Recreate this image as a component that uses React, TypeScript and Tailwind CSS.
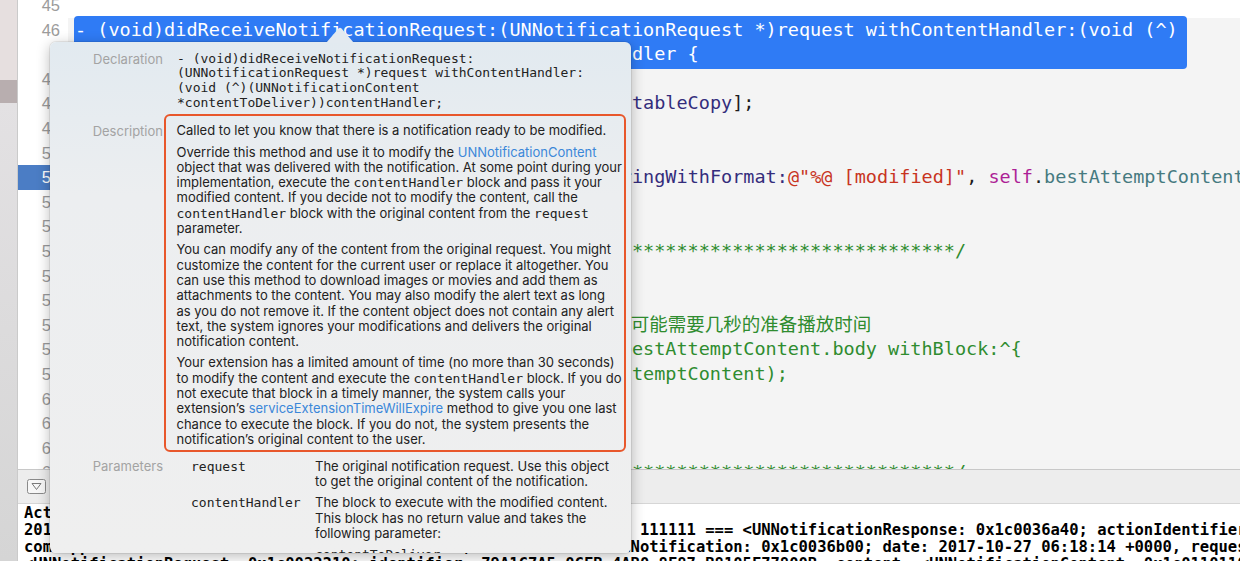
import React from "react";

type Seg = [string, string?];

const KW = "text-[#ad1f96]";
const PROP = "text-[#467a80]";
const METH = "text-[#342d7c]";
const STR = "text-[#c8341f]";
const CMT = "text-[#2f8c2f]";

const stars = "     /" + "*".repeat(73) + "/";

// editor lines 45..63 (46 is the wrapped, selected declaration)
const code: Record<number, Seg[]> = {
  45: [],
  47: [["     "], ["self", KW], [".contentHandler = contentHandler;"]],
  48: [["     "], ["self", KW], ["."], ["bestAttemptContent", PROP], [" = [request.content "], ["mutableCopy", METH], ["];"]],
  49: [],
  50: [["     // Modify the notification content here...", CMT]],
  51: [
    ["     "], ["self", KW], ["."], ["bestAttemptContent", PROP], ["."], ["title", PROP], [" = ["],
    ["NSString", METH], [" "], ["stringWithFormat:", METH], ["@\"%@ [modified]\"", STR], [", "],
    ["self", KW], ["."], ["bestAttemptContent", PROP], ["."], ["title", PROP], ["];"],
  ],
  52: [],
  53: [],
  54: [[stars, CMT]],
  55: [],
  56: [],
  57: [["     // 语音播报通知内容 (iOS 10.0+)，首次合成语音时引擎可能需要几秒的准备播放时间", CMT]],
  58: [["//     [[VoicePlayer sharedPlayer] playText:self.bestAttemptContent.body withBlock:^{", CMT]],
  59: [["//                 self.contentHandler(self.bestAttemptContent);", CMT]],
  60: [["//     }];", CMT]],
  61: [],
  62: [],
  63: [[stars, CMT]],
};

const lineNos = Array.from({ length: 19 }, (_, i) => 45 + i);

type Part = string | { c: string } | { l: string };
const desc: Part[][][] = [
  [["Called to let you know that there is a notification ready to be modified."]],
  [
    ["Override this method and use it to modify the ", { l: "UNNotificationContent" }],
    ["object that was delivered with the notification. At some point during your"],
    ["implementation, execute the ", { c: "contentHandler" }, " block and pass it your"],
    ["modified content. If you decide not to modify the content, call the"],
    [{ c: "contentHandler" }, " block with the original content from the ", { c: "request" }],
    ["parameter."],
  ],
  [
    ["You can modify any of the content from the original request. You might"],
    ["customize the content for the current user or replace it altogether. You"],
    ["can use this method to download images or movies and add them as"],
    ["attachments to the content. You may also modify the alert text as long"],
    ["as you do not remove it. If the content object does not contain any alert"],
    ["text, the system ignores your modifications and delivers the original"],
    ["notification content."],
  ],
  [
    ["Your extension has a limited amount of time (no more than 30 seconds)"],
    ["to modify the content and execute the ", { c: "contentHandler" }, " block. If you do"],
    ["not execute that block in a timely manner, the system calls your"],
    ["extension\u2019s ", { l: "serviceExtensionTimeWillExpire" }, " method to give you one last"],
    ["chance to execute the block. If you do not, the system presents the"],
    ["notification\u2019s original content to the user."],
  ],
];

function Line({ parts }: { parts: Part[] }) {
  return (
    <div className="whitespace-pre h-[15.3px]">
      {parts.map((p, i) =>
        typeof p === "string" ? (
          <span key={i}>{p}</span>
        ) : "c" in p ? (
          <span key={i} className="font-['DejaVu_Sans_Mono',monospace] text-[13px]">
            {p.c}
          </span>
        ) : (
          <span key={i} className="text-[#3b87d9]">
            {p.l}
          </span>
        )
      )}
    </div>
  );
}

function CodeRow({ segs }: { segs: Seg[] }) {
  return (
    <div className="h-[24.6px] leading-[24.6px] whitespace-pre">
      {segs.map(([t, c], i) => (
        <span key={i} className={c}>
          {t}
        </span>
      ))}
    </div>
  );
}

function QuickHelp() {
  return (
    <>
      <svg className="absolute left-[326px] top-[27px] z-20" width="28" height="16" viewBox="0 0 28 16">
        <path d="M0 16 L12.5 1.5 Q14 0 15.5 1.5 L28 16 Z" fill="#e3eaf0" />
      </svg>
      <div className="absolute left-[50px] top-[42px] z-10 w-[581px] h-[511px] rounded-[6px] overflow-hidden bg-linear-to-b from-[#e2eaf0] via-[#eceef0] via-30% to-[#efefef] shadow-[0_0_0_1px_rgba(0,0,0,0.07),0_3px_14px_rgba(0,0,0,0.28)] font-['Inter','Liberation_Sans',sans-serif] text-[13px] text-[#222]">
        <div className="pt-[9.6px]">
          {/* Declaration */}
          <div className="flex">
            <div className="w-[113px] text-right text-[#a3a3a3] leading-[14.8px]">Declaration</div>
            <div className="pl-[14px] font-['DejaVu_Sans_Mono',monospace] leading-[14.8px] whitespace-pre">
              <div>- (void)didReceiveNotificationRequest:</div>
              <div>(UNNotificationRequest *)request withContentHandler:</div>
              <div>(void (^)(UNNotificationContent</div>
              <div>*contentToDeliver))contentHandler;</div>
            </div>
          </div>

          {/* Description */}
          <div className="flex mt-[3px]">
            <div className="w-[114px] text-right text-[#a3a3a3] pt-[10px] leading-[15.3px] pr-[1px]">Description</div>
            <div className="w-[462px] border-[2.5px] border-[#e8572b] rounded-[6px] pl-[10.5px] pt-[7.5px] pb-[3px] leading-[15.3px] flex flex-col gap-[6px]">
              {desc.map((para, i) => (
                <div key={i}>
                  {para.map((ln, j) => (
                    <Line key={j} parts={ln} />
                  ))}
                </div>
              ))}
            </div>
          </div>

          {/* Parameters */}
          <div className="flex mt-[6.4px] leading-[15.3px]">
            <div className="w-[113px] text-right text-[#a3a3a3]">Parameters</div>
            <div className="pl-[28px] flex flex-col gap-[6px]">
              <div className="flex">
                <div className="w-[124px] font-['DejaVu_Sans_Mono',monospace]">request</div>
                <div className="whitespace-pre">
                  <div>The original notification request. Use this object</div>
                  <div>to get the original content of the notification.</div>
                </div>
              </div>
              <div className="flex">
                <div className="w-[124px] font-['DejaVu_Sans_Mono',monospace]">contentHandler</div>
                <div className="whitespace-pre flex flex-col gap-[6px]">
                  <div>
                    <div>The block to execute with the modified content.</div>
                    <div>This block has no return value and takes the</div>
                    <div>following parameter:</div>
                  </div>
                  <div className="font-['DejaVu_Sans_Mono',monospace]">contentToDeliver</div>
                </div>
              </div>
            </div>
          </div>
        </div>
      </div>
    </>
  );
}

export default function App() {
  return (
    <div className="relative w-[1240px] h-[561px] overflow-hidden flex bg-white">
      {/* left window strip */}
      <div className="w-[18px] h-full flex flex-col border-r border-[#cacaca]">
        <div className="h-[80px] bg-[#e6dfdf]" />
        <div className="h-[23px] bg-[#b8aeaf]" />
        <div className="flex-1 bg-linear-to-b from-[#e3e1e3] to-[#d5d5d5]" />
      </div>

      <div className="flex-1 min-w-0 flex flex-col">
        {/* editor */}
        <div className="h-[469px] flex overflow-hidden bg-[#f4f4f4]">
          <div className="w-[50px] shrink-0 bg-white -mt-[7px] font-['Liberation_Sans',sans-serif] text-[16.5px] text-[#9b9b9b]">
            {lineNos.map((n) => (
              <React.Fragment key={n}>
                <div
                  className={
                    n === 51
                      ? "h-[24.6px] leading-[24.6px] text-right pr-[8px] bg-[#4b7dc5] text-white"
                      : "h-[24.6px] leading-[24.6px] text-right pr-[8px]"
                  }
                >
                  {n}
                </div>
                {n === 46 && <div className="h-[24.6px]" />}
              </React.Fragment>
            ))}
          </div>
          <div className="flex-1 min-w-0 pl-[7px] -mt-[7px] font-['DejaVu_Sans_Mono','Noto_Sans_CJK_SC',monospace] text-[18.5px] text-[#1c1c1c]">
            <div className="-ml-[7px] pl-[7px] bg-white">
              <CodeRow segs={code[45]} />
            </div>
            <div className="-ml-[1px] pl-[1px] w-[1113px] -my-[2px] py-[2px] bg-[#2f7bf5] rounded-[4px] text-white">
              <CodeRow segs={[["- (void)didReceiveNotificationRequest:(UNNotificationRequest *)request withContentHandler:(void (^)"]]} />
              <CodeRow segs={[["     (UNNotificationContent * _Nonnull))contentHandler {"]]} />
            </div>
            {lineNos
              .filter((n) => n > 46)
              .map((n) => (
                <CodeRow key={n} segs={code[n]} />
              ))}
          </div>
        </div>

        {/* debug bar */}
        <div className="h-[35px] shrink-0 bg-[#ededed] border-t border-[#c8c8c8] border-b border-b-[#d6d6d6] flex items-center pl-[9px]">
          <svg width="19" height="15" viewBox="0 0 19 15">
            <rect x="0.5" y="0.5" width="18" height="14" rx="2" fill="#f7f7f7" stroke="#8a8a8a" />
            <path d="M5 4.5 H14 L9.5 10.5 Z" fill="none" stroke="#7a7a7a" strokeLinejoin="round" />
          </svg>
        </div>

        {/* console */}
        <div className="flex-1 bg-white pl-[6px] pt-[0.5px] overflow-hidden font-['DejaVu_Sans_Mono',monospace] font-bold text-[15.5px] leading-[17px] text-black whitespace-pre">
          <div>Action: com.apple.UNNotificationDefaultActionIdentifier</div>
          <div>2017-10-27 14:18:14.372485+0800 PushNotificationDemo[1432:512698] 111111 === &lt;UNNotificationResponse: 0x1c0036a40; actionIdentifier: com.apple.UNNotificationDefaultActionIdentifier,</div>
          <div>com.apple.UNNotificationDefaultActionIdentifier, notification:&lt;UNNotification: 0x1c0036b00; date: 2017-10-27 06:18:14 +0000, request:</div>
          <div>&lt;UNNotificationRequest: 0x1c0022310; identifier: 79A1C7A5-0CFB-4AB0-8F87-B8105F77800B, content: &lt;UNNotificationContent: 0x1c0110110;</div>
        </div>
      </div>

      <QuickHelp />
    </div>
  );
}
